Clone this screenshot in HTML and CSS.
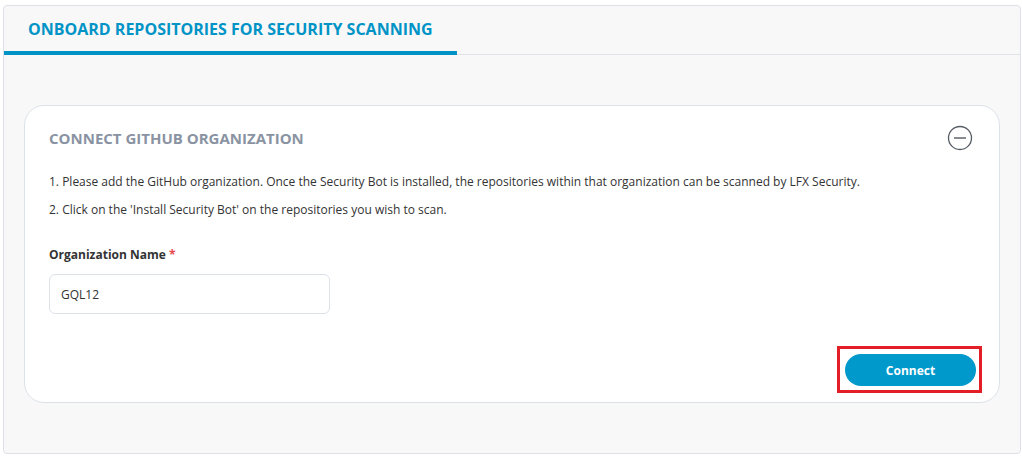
FILE: index.html
```html
<!DOCTYPE html>
<html lang="en">
<head>
    <meta charset="UTF-8">
    <title>Onboard Repositories</title>
    <meta name="viewport" content="width=device-width, initial-scale=1.0">
    <link rel="stylesheet" href="styles.css">
</head>
<body>
    <div class="panel">
        <div class="tabs">
            <div class="tab active">ONBOARD REPOSITORIES FOR SECURITY SCANNING</div>
        </div>
        <main class="panel-body">
            <section class="card">
                <div class="card-head">
                    <h2>CONNECT GITHUB ORGANIZATION</h2>
                    <button class="collapse" aria-label="Collapse">
                        <svg width="26" height="26" viewBox="0 0 26 26">
                            <circle cx="13" cy="13" r="11.5" fill="none" stroke="#555b63" stroke-width="1.3"/>
                            <line x1="7" y1="13" x2="19" y2="13" stroke="#555b63" stroke-width="1.4"/>
                        </svg>
                    </button>
                </div>
                <p>1. Please add the GitHub organization. Once the Security Bot is installed, the repositories within that organization can be scanned by LFX Security.</p>
                <p>2. Click on the 'Install Security Bot' on the repositories you wish to scan.</p>
                <label class="field-label" for="org">Organization Name <span class="req">*</span></label>
                <input id="org" class="field" type="text" value="GQL12">
                <div class="actions">
                    <div class="highlight">
                        <button class="btn-primary">Connect</button>
                    </div>
                </div>
            </section>
        </main>
    </div>
</body>
</html>
```

FILE: styles.css
```css
body {
    margin: 0;
    padding: 5px 1px 4px 3px;
    background: #fff;
    font-family: "Open Sans", Arial, sans-serif;
    color: #333;
}
.panel {
    background: #f8f8f9;
    border: 1px solid #dde1e7;
    border-radius: 4px;
    height: 447px;
}
.tabs {
    display: flex;
    height: 48px;
    border-bottom: 1px solid #dfe2e6;
}
.tab {
    display: flex;
    align-items: center;
    padding: 0 24px;
    font-size: 16px;
    font-weight: 700;
    color: #0094c6;
    margin-bottom: -1px;
}
.tab.active {
    border-bottom: 4px solid #0094c6;
    padding-top: 1px;
}
.panel-body {
    padding: 50px 20px;
}
.card {
    background: #fff;
    border: 1px solid #dde2ea;
    border-radius: 20px;
    padding: 20px 23px 16px 24px;
}
.card-head {
    display: flex;
    align-items: center;
    justify-content: space-between;
    height: 24px;
    margin-bottom: 22px;
}
.card-head h2 {
    margin: 0;
    font-size: 15px;
    font-weight: 700;
    color: #8a93a2;
}
.collapse {
    border: 0;
    background: none;
    padding: 0;
    width: 26px;
    height: 26px;
    margin-right: 3px;
}
.collapse svg {
    display: block;
}
.card p {
    margin: 0 0 9px;
    font-size: 12px;
    line-height: 19px;
}
.field-label {
    display: block;
    margin-top: 26px;
    font-size: 12px;
    line-height: 19px;
    font-weight: 700;
}
.req {
    color: #e5484d;
}
.field {
    display: block;
    box-sizing: border-box;
    margin-top: 10px;
    width: 281px;
    height: 40px;
    padding: 0 11px;
    border: 1px solid #dde2ea;
    border-radius: 6px;
    font-family: inherit;
    font-size: 12px;
    color: #333;
}
.actions {
    display: flex;
    justify-content: flex-end;
    margin-top: 40px;
}
.highlight {
    display: flex;
    border: 3px solid #e41e26;
    padding: 5px 3px 4px 5px;
    margin: -8px -6px -7px -8px;
}
.btn-primary {
    width: 131px;
    height: 32px;
    border: 0;
    border-radius: 16px;
    background: #0099cc;
    color: #fff;
    font-family: inherit;
    font-size: 12px;
    font-weight: 700;
}
```
